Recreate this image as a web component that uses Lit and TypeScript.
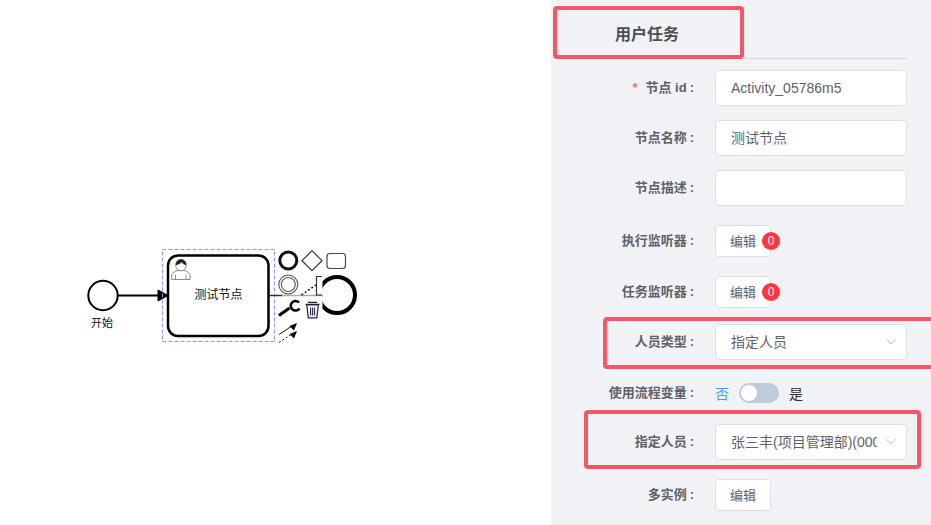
import { LitElement, html, css, svg } from "lit";
import { customElement } from "lit/decorators.js";

const chevron = html`<svg class="chev" width="12" height="7" viewBox="0 0 12 7"><path d="M1 1l5 5 5-5" fill="none" stroke="#c0c4cc" stroke-width="1"/></svg>`;

const diagram = svg`
  <g fill="none" stroke="#000">
    <circle cx="103" cy="295.500" r="14.700" stroke-width="2"/>
    <path d="M118 295.500H160" stroke-width="2"/>
    <path d="M158 290l10 5.500-10 5.500z" fill="#000" stroke-width="1"/>
    <rect x="162.500" y="249.500" width="112" height="92" stroke="#7f9fdc" stroke-width="1" stroke-dasharray="4 2"/>
    <rect x="168" y="255.500" width="100.500" height="80.500" rx="10" stroke-width="2.500"/>
    <circle cx="337" cy="295" r="18" stroke-width="4"/>
    <rect x="300" y="272" width="22.500" height="46" fill="#fff" stroke="none"/>
    <path d="M269 295.500H282" stroke="#333" stroke-width="1.500"/>
    <path d="M282 295.500H323" stroke="#aaa" stroke-width="1.500"/>
    <path d="M171.700 279.500v-4.500c0-2 3.500-3.500 6.300-4.700h6c2.800 1.200 6 2.700 6 4.700v4.500z" fill="#fff" stroke="#888" stroke-width="1"/>
    <path d="M175.500 279v-4.500M186 279v-4.500" stroke="#999" stroke-width="1"/>
    <circle cx="181" cy="265.500" r="5.300" fill="#fff" stroke="#888" stroke-width="1"/>
    <path d="M176 265c-.5-7.500 10.500-7.500 10 0-2-.5-3.500-2-4.500-3-1 1.500-3.500 2.500-5.500 3z" fill="#222" stroke="#222" stroke-width=".5"/>
    <circle cx="288.300" cy="260.500" r="8.500" stroke="#111" stroke-width="3"/>
    <path d="M312 250.700l10 10-10 10-10-10z" stroke="#334" stroke-width="1.200"/>
    <rect x="327" y="253.500" width="18.500" height="15" rx="3" stroke="#4a4a4a" stroke-width="1.200"/>
    <circle cx="288.300" cy="284.500" r="9.500" stroke="#555" stroke-width="1.100"/>
    <circle cx="288.300" cy="284.500" r="7" stroke="#555" stroke-width="1.100"/>
    <path d="M301.500 295l14.500-10" stroke="#111" stroke-width="1.500" stroke-dasharray="2 2"/>
    <path d="M322 276.500h-5.500v18.500h5.500" stroke="#333" stroke-width="1.200"/>
    <path d="M279 315.500l10.500-7.500" stroke="#000" stroke-width="3"/>
    <path d="M299 302.500a4.800 4.800 0 1 0 .5 6" stroke="#000" stroke-width="2.500"/>
    <g stroke="#223" stroke-width="1.200">
      <path d="M305.500 304.300h14M308 302.300h9"/>
      <path d="M306.800 305l1.500 12.800h8.500l1.500-12.800z"/>
      <path d="M310.500 307.500v8M312.500 307.500v8M314.500 307.500v8" stroke="#335"/>
    </g>
    <path d="M279 334.500l13-8.500" stroke="#111" stroke-width="1"/>
    <path d="M297 323l-7.500 3 4.500 4.500z" fill="#000" stroke="none"/>
    <path d="M279 342.500l13-8.500" stroke="#111" stroke-width="1" stroke-dasharray="2 2"/>
    <path d="M297 331l-7.500 3 4.500 4.500z" fill="#000" stroke="none"/>
  </g>
  <text x="102" y="327" text-anchor="middle" font-size="11" fill="#111">开始</text>
  <text x="218.500" y="299" text-anchor="middle" font-size="12" fill="#111">测试节点</text>
`;

@customElement("app-root")
export class AppRoot extends LitElement {
  static styles = css`
    :host {
      display: flex;
      position: relative;
      width: 931px;
      height: 525px;
      overflow: hidden;
      background: #fff;
      font-family: "Liberation Sans", "Noto Sans CJK SC", sans-serif;
      color: #606266;
    }
    .canvas { flex: 1; min-width: 0; }
    .canvas svg {
      display: block;
      font-family: "Noto Sans CJK SC", sans-serif;
    }
    .panel {
      width: 380px;
      flex: none;
      background: #f0f2f6;
      padding: 0 24px 0 44px;
      box-sizing: border-box;
    }
    .title {
      height: 59px;
      box-sizing: border-box;
      padding-left: 20px;
      line-height: 66px;
      font-size: 16px;
      font-weight: 700;
      color: #4a4d52;
      border-bottom: 1px solid #d3d6dc;
      font-family: "Noto Sans CJK SC", sans-serif;
    }
    .row {
      display: flex;
      align-items: center;
      height: 36px;
      margin-top: 14px;
    }
    .first { margin-top: 11px; }
    .short { height: 32px; margin-top: 19px; }
    .sel1 { margin-top: 16px; }
    .switch-row { height: 20px; margin-top: 23px; }
    .sel2 { margin-top: 21px; }
    .label {
      width: 120px;
      flex: none;
      box-sizing: border-box;
      padding: 0 21px 4px 0;
      text-align: right;
      font-size: 13px;
      font-weight: 700;
      color: #606266;
      white-space: nowrap;
    }
    .star { color: #f56c6c; margin-right: 8px; }
    .colon { margin-left: 3px; }
    .field {
      width: 192px;
      height: 36px;
      box-sizing: border-box;
      display: flex;
      align-items: center;
      background: #fff;
      border: 1px solid #dcdfe6;
      border-radius: 4px;
      padding: 0 15px;
      font-size: 14px;
      color: #606266;
      white-space: nowrap;
      overflow: hidden;
    }
    .value { flex: 1; min-width: 0; overflow: hidden; }
    .cjk { padding-bottom: 3px; }
    .chev { flex: none; margin: 2px -6px 0 8px; }
    .btn-wrap { position: relative; }
    .btn {
      width: 56px;
      height: 32px;
      padding: 0 0 2px;
      box-sizing: border-box;
      background: #fff;
      border: 1px solid #dcdfe6;
      border-radius: 3px;
      font: inherit;
      font-size: 13px;
      color: #606266;
    }
    .badge {
      position: absolute;
      left: 47px;
      top: 7px;
      width: 18px;
      height: 18px;
      border-radius: 50%;
      background: #f9373f;
      color: #fff;
      font-size: 12px;
      line-height: 18px;
      text-align: center;
    }
    .opt { font-size: 14px; padding-bottom: 1px; }
    .opt.on { color: #409eff; }
    .opt.off { color: #303133; }
    .toggle {
      position: relative;
      width: 40px;
      height: 20px;
      margin: 0 10px;
      border-radius: 10px;
      background: #bfcbd9;
    }
    .knob {
      position: absolute;
      left: 2px;
      top: 2px;
      width: 16px;
      height: 16px;
      border-radius: 50%;
      background: #fff;
    }
    .mark {
      position: absolute;
      box-sizing: border-box;
      border: 4px solid #f95568;
      border-radius: 4px;
    }
    .m1 { left: 553px; top: 6px; width: 191px; height: 53px; }
    .m2 { left: 603px; top: 317px; width: 340px; height: 52px; }
    .m3 { left: 584px; top: 410px; width: 337px; height: 59px; }
  `;

  private label(text: string, star = false) {
    return html`<div class="label">${star ? html`<span class="star">*</span>` : ""}${text}<span class="colon">:</span></div>`;
  }

  private editBtn(count?: number) {
    return html`<div class="btn-wrap"><button class="btn">编辑</button>${count !== undefined ? html`<span class="badge">${count}</span>` : ""}</div>`;
  }

  render() {
    return html`
      <div class="canvas">
        <svg width="551" height="525" viewBox="0 0 551 525">${diagram}</svg>
      </div>
      <div class="panel">
        <div class="title">用户任务</div>
        <div class="row first">${this.label("节点 id", true)}<div class="field"><span class="value">Activity_05786m5</span></div></div>
        <div class="row">${this.label("节点名称")}<div class="field cjk"><span class="value">测试节点</span></div></div>
        <div class="row">${this.label("节点描述")}<div class="field"></div></div>
        <div class="row short">${this.label("执行监听器")}${this.editBtn(0)}</div>
        <div class="row short">${this.label("任务监听器")}${this.editBtn(0)}</div>
        <div class="row sel1">${this.label("人员类型")}<div class="field cjk"><span class="value">指定人员</span>${chevron}</div></div>
        <div class="row switch-row">${this.label("使用流程变量")}
          <span class="opt on">否</span><div class="toggle"><div class="knob"></div></div><span class="opt off">是</span>
        </div>
        <div class="row sel2">${this.label("指定人员")}<div class="field cjk"><span class="value">张三丰(项目管理部)(000001)</span>${chevron}</div></div>
        <div class="row short">${this.label("多实例")}${this.editBtn()}</div>
      </div>
      <div class="mark m1"></div>
      <div class="mark m2"></div>
      <div class="mark m3"></div>
    `;
  }
}
